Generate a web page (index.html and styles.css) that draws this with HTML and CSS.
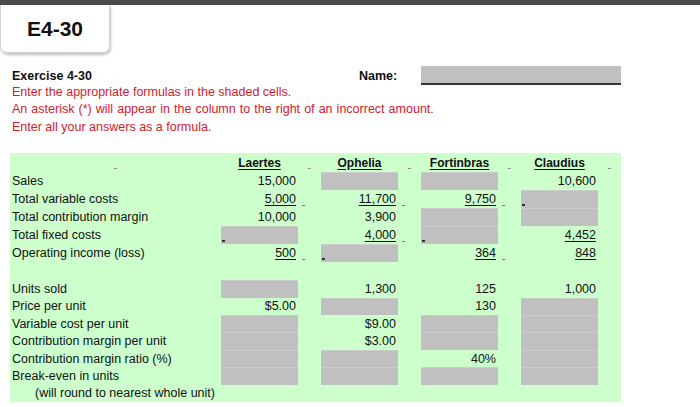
FILE: index.html
```html
<!DOCTYPE html>
<html>
<head>
<meta charset="utf-8">
<link rel="stylesheet" href="styles.css">
</head>
<body>
<div class="topbar"></div>
<div class="tab">E4-30</div>

<div class="intro">
  <div class="ex-row">
    <div class="ex-title">Exercise 4-30</div>
    <div class="name-lbl">Name:</div>
    <div class="name-box"></div>
  </div>
  <div class="red">Enter the appropriate formulas in the shaded cells.</div>
  <div class="red wide">An asterisk (*) will appear in the column to the right of an incorrect amount.</div>
  <div class="red">Enter all your answers as a formula.</div>
</div>

<div class="sheet">
  <div class="row">
    <div class="lbl lbl-h"><i class="mh"></i></div>
    <div class="v hd">Laertes</div><div class="mkh"><i></i></div>
    <div class="v hd">Ophelia</div><div class="mkh"><i></i></div>
    <div class="v hd">Fortinbras</div><div class="mkh"><i></i></div>
    <div class="v hd">Claudius</div><div class="mkh"><i></i></div>
  </div>
  <div class="row">
    <div class="lbl">Sales</div>
    <div class="v">15,000</div><div></div>
    <div class="v g"></div><div></div>
    <div class="v g"></div><div></div>
    <div class="v">10,600</div><div></div>
  </div>
  <div class="row">
    <div class="lbl">Total variable costs</div>
    <div class="v"><u>5,000</u></div><div class="mk"><i></i></div>
    <div class="v"><u>11,700</u></div><div class="mk"><i></i></div>
    <div class="v"><u>9,750</u></div><div class="mk"><i></i></div>
    <div class="v g dash"><i></i></div><div></div>
  </div>
  <div class="row">
    <div class="lbl">Total contribution margin</div>
    <div class="v">10,000</div><div></div>
    <div class="v">3,900</div><div></div>
    <div class="v g"></div><div></div>
    <div class="v g"></div><div></div>
  </div>
  <div class="row">
    <div class="lbl">Total fixed costs</div>
    <div class="v g dash"><i></i></div><div></div>
    <div class="v"><u>4,000</u></div><div class="mk"><i></i></div>
    <div class="v g dash"><i></i></div><div></div>
    <div class="v"><u>4,452</u></div><div></div>
  </div>
  <div class="row">
    <div class="lbl">Operating income (loss)</div>
    <div class="v"><u>500</u></div><div class="mk"><i></i></div>
    <div class="v g dash"><i></i></div><div></div>
    <div class="v"><u>364</u></div><div class="mk"><i></i></div>
    <div class="v"><u>848</u></div><div></div>
  </div>
  <div class="row">
    <div class="lbl"></div>
  </div>
  <div class="row">
    <div class="lbl">Units sold</div>
    <div class="v g"></div><div></div>
    <div class="v">1,300</div><div></div>
    <div class="v">125</div><div></div>
    <div class="v">1,000</div><div></div>
  </div>
  <div class="row r17">
    <div class="lbl">Price per unit</div>
    <div class="v">$5.00</div><div></div>
    <div class="v g"></div><div></div>
    <div class="v">130</div><div></div>
    <div class="v g"></div><div></div>
  </div>
  <div class="row r175">
    <div class="lbl">Variable cost per unit</div>
    <div class="v g"></div><div></div>
    <div class="v">$9.00</div><div></div>
    <div class="v g"></div><div></div>
    <div class="v g"></div><div></div>
  </div>
  <div class="row r175">
    <div class="lbl">Contribution margin per unit</div>
    <div class="v g"></div><div></div>
    <div class="v">$3.00</div><div></div>
    <div class="v g"></div><div></div>
    <div class="v g"></div><div></div>
  </div>
  <div class="row r175">
    <div class="lbl">Contribution margin ratio (%)</div>
    <div class="v g"></div><div></div>
    <div class="v g"></div><div></div>
    <div class="v">40%</div><div></div>
    <div class="v g"></div><div></div>
  </div>
  <div class="row r175">
    <div class="lbl">Break-even in units</div>
    <div class="v g"></div><div></div>
    <div class="v g"></div><div></div>
    <div class="v g"></div><div></div>
    <div class="v g"></div><div></div>
  </div>
  <div class="row r17">
    <div class="lbl indent">(will round to nearest whole unit)</div>
  </div>
</div>
</body>
</html>
```

FILE: styles.css
```css
body {
  margin: 0;
  width: 700px;
  background: #ffffff;
  color: #111111;
  font-family: "Liberation Sans", Arial, sans-serif;
  font-size: 12.5px;
}

.topbar {
  height: 5px;
  background: #4b4b4b;
}

.tab {
  width: 110px;
  height: 48px;
  box-sizing: border-box;
  border: 1px solid #d2d2d2;
  border-top: none;
  border-radius: 0 0 7px 7px;
  box-shadow: 1px 2px 3px rgba(0, 0, 0, 0.25);
  display: flex;
  align-items: center;
  justify-content: center;
  font-weight: bold;
  font-size: 21px;
  color: #111;
}

.intro {
  margin-top: 14px;
  padding-left: 12px;
}

.ex-row {
  display: flex;
  align-items: center;
  height: 17px;
  font-weight: bold;
}

.ex-title {
  width: 347px;
}

.name-lbl {
  width: 62px;
}

.name-box {
  align-self: flex-start;
  margin-top: -1px;
  width: 200px;
  height: 17px;
  background: #c0c0c0;
  border-bottom: 2px solid #333333;
}

.red {
  color: #d0202e;
  line-height: 17.3px;
}

.red.wide {
  word-spacing: 0.6px;
}

.sheet {
  margin: 17px 0 0 10px;
  width: 611px;
  padding-top: 1px;
  background: #ccffcc;
}

.row {
  display: grid;
  grid-template-columns: 210px repeat(4, 78px 22px);
  height: 18px;
}

.row.r17 {
  height: 17px;
}

.row.r175 {
  height: 17.5px;
}

.lbl {
  display: flex;
  align-items: center;
  padding-left: 2px;
  white-space: nowrap;
}

.lbl.indent {
  padding-left: 25px;
}

.lbl-h {
  justify-content: center;
  padding-left: 0;
}

.lbl-h .mh,
.mkh i {
  display: block;
  width: 3px;
  height: 1px;
  margin-top: 12px;
  background: #8c8c8c;
}

.v {
  margin-left: 1px;
  display: flex;
  align-items: center;
  justify-content: flex-end;
  padding-right: 2px;
  white-space: nowrap;
}

.v u {
  text-decoration: underline;
  text-underline-offset: 2px;
}

.hd {
  justify-content: center;
  padding-right: 0;
  font-size: 12px;
  font-weight: bold;
  text-decoration: underline;
  text-underline-offset: 2px;
}

.g {
  background: #c0c0c0;
  box-shadow: inset 0 1px 0 #cccccc;
}

.g.dash {
  justify-content: flex-start;
  align-items: flex-end;
  padding: 0 0 2px 1px;
}

.g.dash i {
  display: block;
  width: 3px;
  height: 2px;
  background: #333333;
}

.mk {
  display: flex;
  align-items: flex-end;
  padding: 0 0 2px 4px;
}

.mk i {
  display: block;
  width: 3px;
  height: 1px;
  background: #7a7a7a;
}

.mkh {
  display: flex;
  justify-content: center;
  align-items: center;
}
```
